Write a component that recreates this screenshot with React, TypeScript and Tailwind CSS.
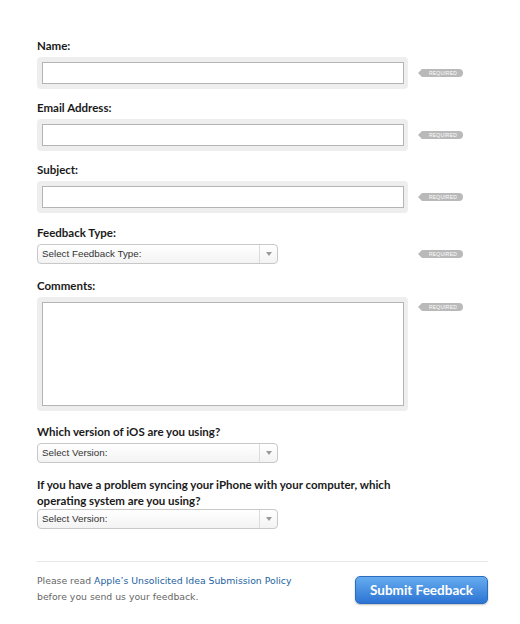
import React from "react";

function Required() {
  return (
    <svg width="45" height="8" viewBox="0 0 45 8" className="block">
      <path d="M0 4 L4 0 H41 A4 4 0 0 1 41 8 H4 Z" fill="#b9b9b9" />
      <text x="25" y="5.8" textAnchor="middle" fontSize="5" fill="#ffffff" fontFamily="Liberation Sans, sans-serif" letterSpacing="0.2">
        REQUIRED
      </text>
    </svg>
  );
}

function Label({ children, className = "" }: { children: React.ReactNode; className?: string }) {
  return (
    <div className={`text-[11.5px] font-bold text-[#1a1a1a] leading-[16px] font-['Lato',sans-serif] ${className}`}>
      {children}
    </div>
  );
}

function TextField({ tall = false }: { tall?: boolean }) {
  return (
    <div className="w-[371px] bg-[#eeeeee] rounded-[4px] p-[5px]">
      <div className={`w-[362px] bg-white border border-[#b4b4b4] ${tall ? "h-[104px]" : "h-[22px]"}`} />
    </div>
  );
}

function Select({ text }: { text: string }) {
  return (
    <div className="w-[241px] h-[20px] flex items-center rounded-[4px] border border-[#c8c8c8] bg-gradient-to-b from-white to-[#f3f3f3] font-['Liberation_Sans',Arial,sans-serif] text-[9.8px] text-[#333]">
      <span className="flex-1 pl-[4px]">{text}</span>
      <div className="w-[18px] h-full border-l border-[#dcdcdc] flex items-center justify-center">
        <svg width="6" height="4" viewBox="0 0 6 4">
          <path d="M0 0 H6 L3 4 Z" fill="#999" />
        </svg>
      </div>
    </div>
  );
}

function Row({ children, badgeTop = false }: { children: React.ReactNode; badgeTop?: boolean }) {
  return (
    <div className={`flex ${badgeTop ? "items-start" : "items-center"}`}>
      <div className="w-[381px]">{children}</div>
      <div className={badgeTop ? "pt-[6px]" : ""}>
        <Required />
      </div>
    </div>
  );
}

export default function App() {
  return (
    <div className="w-[520px] h-[624px] bg-white pl-[37px] pt-[38px]">
      <Label className="mb-[3px]">Name:</Label>
      <Row>
        <TextField />
      </Row>

      <Label className="mt-[11px] mb-[3px]">Email Address:</Label>
      <Row>
        <TextField />
      </Row>

      <Label className="mt-[11px] mb-[3px]">Subject:</Label>
      <Row>
        <TextField />
      </Row>

      <Label className="mt-[12px] mb-[3px]">Feedback Type:</Label>
      <Row>
        <Select text="Select Feedback Type:" />
      </Row>

      <Label className="mt-[14px] mb-[3px]">Comments:</Label>
      <Row badgeTop>
        <TextField tall />
      </Row>

      <Label className="mt-[13px] mb-[3px]">Which version of iOS are you using?</Label>
      <Select text="Select Version:" />

      <Label className="mt-[14px] w-[360px]">
        If you have a problem syncing your iPhone with your computer, which operating system are you using?
      </Label>
      <Select text="Select Version:" />

      <div className="w-[451px] border-t border-[#e6e6e6] mt-[32px]" />

      <div className="w-[451px] flex items-start justify-between mt-[11px]">
        <p className="font-['DejaVu_Sans',sans-serif] text-[9.3px] leading-[16px] text-[#666]">
          Please read <a className="text-[#1d5f9e]">Apple’s Unsolicited Idea Submission Policy</a>
          <br />
          before you send us your feedback.
        </p>
        <button className="w-[133px] h-[28px] mt-[3px] rounded-[5px] border border-[#2b6cc0] bg-gradient-to-b from-[#66acef] to-[#2c74d4] shadow-[0_1px_2px_rgba(0,0,0,0.25)] text-white text-[13.5px] font-bold font-['Lato',sans-serif]">
          Submit Feedback
        </button>
      </div>
    </div>
  );
}
